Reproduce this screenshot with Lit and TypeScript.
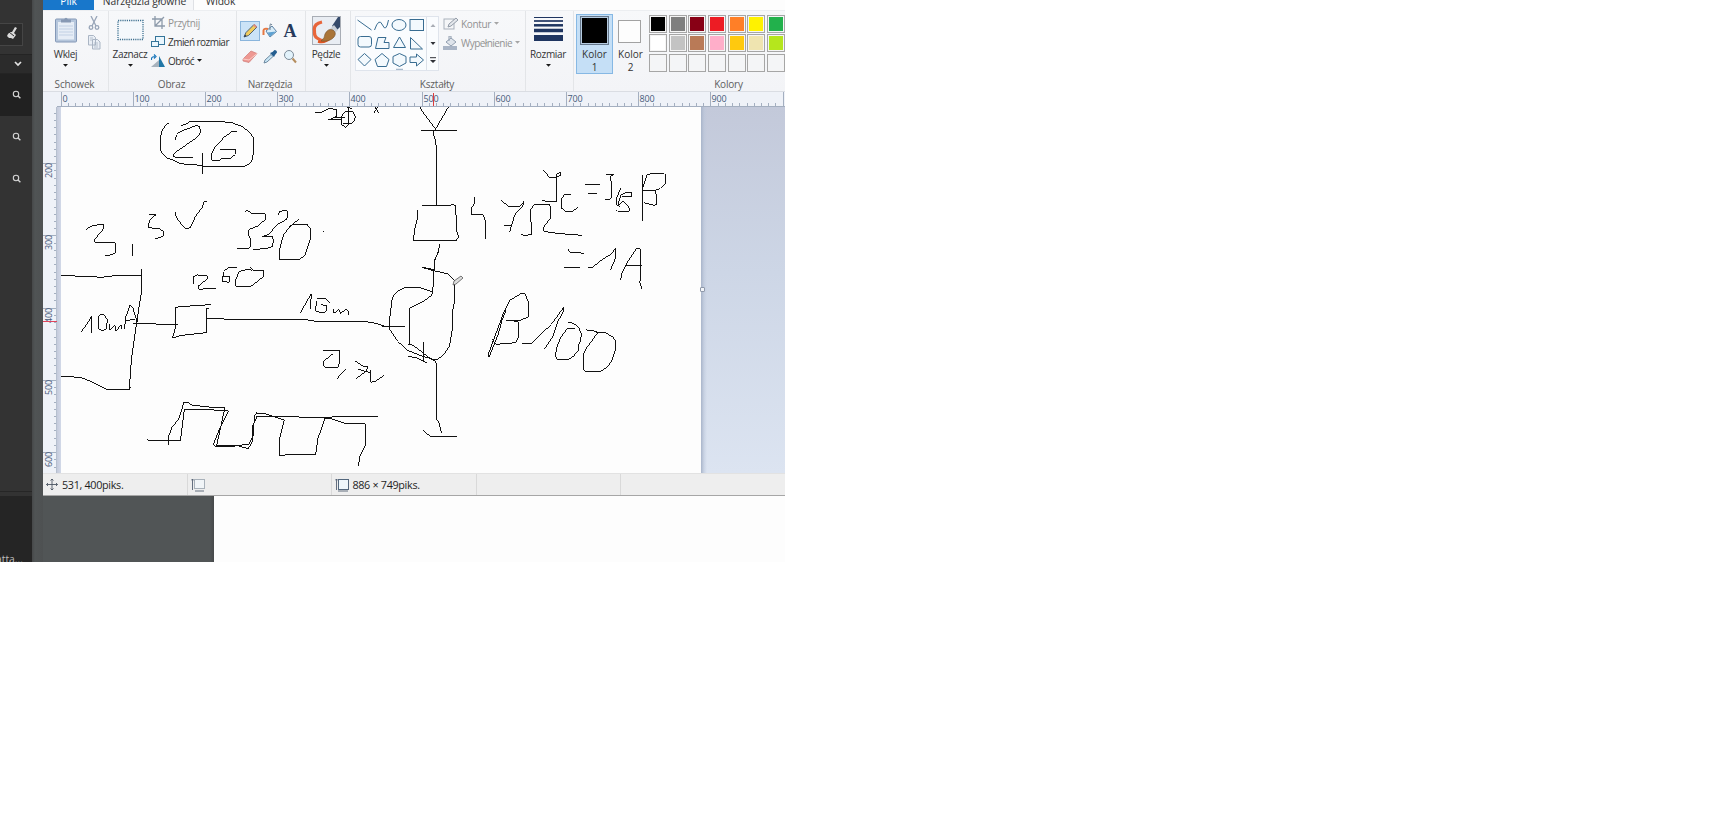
import { LitElement, html, css, svg } from "lit";
import { customElement } from "lit/decorators.js";

const search = html`<svg width="10" height="10" viewBox="0 0 10 10"><circle cx="4" cy="4" r="2.7" fill="none" stroke="#d4d4d4" stroke-width="1.1"/><path d="M6 6L8.4 8.2" stroke="#d4d4d4" stroke-width="1.4"/></svg>`;
const arrow = (c = "#1a1a1a") => html`<svg width="5" height="3" viewBox="0 0 5 3"><path d="M0 0H5L2.5 2.8Z" fill=${c}/></svg>`;

const STEP = 7.222;
const rows: string[][] = [
  ["#000000", "#7f7f7f", "#880015", "#ed1c24", "#ff7f27", "#fff200", "#22b14c"],
  ["#ffffff", "#c3c3c3", "#b97a57", "#ffaec9", "#ffc90e", "#efe4b0", "#b5e61d"],
  ["#f4f5f7", "#f4f5f7", "#f4f5f7", "#f4f5f7", "#f4f5f7", "#f4f5f7", "#f4f5f7"],
];

/* Pen strokes, grouped by board section: origin x, origin y, path in thirds of a pixel */
const strokes: [number, number, string][] = [
  [40, 100, `M386 69L375 77L364 98L361 115V150L368 162L381 174L400 180L420 191L470 195L495 199H614L630 190L638 176L640 155V111L622 91L605 79L575 68L545 65H450L441 71L424 77
    M406 119L410 104L420 95L470 76L479 80L482 98L471 112L401 161L400 169L409 172H458 M488 160V222 M590 94H577L552 112L525 142L516 160L515 180L540 181L546 175L574 174L586 163L587 149H540
    M138 388L160 376L191 373V386L165 417L164 427H224L228 437L227 458L212 465L196 466 M277 433V467
    M327 343L348 344L328 362L325 383L357 386L370 394L370 408L356 414L344 415 M406 337L409 352L431 382L440 386L451 383L466 350L487 322L492 305L501 304
    M616 335L622 331L637 341H675L677 357L656 377L626 389L624 400L632 418V440L626 446H590 M715 345L718 336L734 331L744 334V348L738 359L712 374L687 402L665 411H698L700 420L698 438L681 446L640 448
    M776 358L758 372L731 403L718 450V478L777 479L794 467L811 417V385L801 373H757L746 382 M850 394L852 395`],
  [40, 260, `M62 47L145 49L185 52L230 46H304 M304 27V100L296 148L284 230L274 300L268 387 M62 349L122 352L150 363L203 390H267L272 382
    M122 217L137 198L155 169L156 220 M176 169L177 207L188 213L199 206L202 180L192 164L183 162L176 169 M209 191L210 211L224 195L228 212L243 196L244 206 M254 208L256 175L270 136L278 142L292 186 M256 182L286 178
    M280 190H342L352 193H415 M512 134L420 140L408 142L405 208L397 234L425 226L499 218V147L507 146 M499 175H543L558 178L800 179L826 184H968L1000 188L1035 199H1080
    M461 71V49L472 45L502 47L503 56L475 78L476 88L528 84 M592 24L565 22L551 35L547 64L568 67L570 49L549 48 M636 31L626 27L598 34L587 59V79H633L669 51L671 33L640 30L630 22
    M780 160L814 101L811 146 M829 123L827 154L854 159L860 148L860 137L844 134 M872 130L857 115L830 116 M879 148L882 160L896 149L902 161L916 148L925 152L925 164
    M848 271L900 273V306L894 321L858 324L849 315L851 304L880 280 M918 327L889 358 M946 303L968 318L984 320L977 334L949 356 M955 328L991 338 M991 330L993 367L1005 364L1032 347
    M321 540L421 543L433 449L495 448L565 453L538 508L520 553L524 559H578L628 552L640 525L643 470L649 459L671 460L733 480L718 540V586L770 583H827L834 535L855 475L876 477L919 491H976V557L960 588L955 617
    M385 554V532L397 499L415 480L432 427L446 429L456 435L504 441L555 442L530 557L596 558L625 566L637 545V501L651 469H770L785 473H860L875 471H1013`],
  [300, 90, `M45 68H63L87 56L111 58V79L85 90H124 M104 82L134 84 M145 48V106L137 112L126 105L124 80L136 64L157 64L166 79L163 92L153 101H128 M133 48L157 59 M210 48L225 51L236 70 M233 51L222 69
    M358 48L370 69L407 117L447 48 M363 121H471 M407 117L399 129L408 155L409 344 M367 348L378 346H450L458 342L467 347L470 425L477 440L467 453H340L344 419L352 386L351 360 M419 463L415 487L405 507L402 539L367 532
    M523 321L522 342L515 354V375H549L556 392V448 M602 331L626 349H660L672 334L670 345L644 375L629 425 M613 407H637 M663 432L672 436L694 434L692 359L703 343H749L753 357V382L730 413L731 424L770 430L846 436
    M730 240L748 262H770L782 255V246L770 252L769 335H740L727 330 M812 314L792 315L784 329V354L797 364L818 364L833 353`],
  [470, 150, `M345 104H389 M355 130H381 M408 75L415 73H433L422 78L426 136L421 148L406 150 M452 115L441 142V166L450 170 M439 180L443 184L478 183L477 173L460 153L443 167L453 135L468 127L486 127L485 138L457 141
    M517 76V213 M519 112L531 75L542 71H583L588 77L585 101L571 115L553 122H520 M555 124L560 135V163L552 166L521 158
    M295 296L298 306L343 310 M282 352H330 M354 352L368 352L390 333L424 312L437 294L435 328L421 361 M452 390L456 369L473 336L500 294L511 296L510 398L515 416 M464 346H515
    M55 621L57 607L104 480L108 482L96 511L85 552L57 622 M67 568L77 583L137 578L147 560V517L132 513L107 511H152L175 500L176 458L165 432L153 431L119 451L105 480
    M156 580H185L244 523L281 472L279 486L264 514L249 558L224 597 M294 517H304L325 530L334 552L332 572L326 583V600L312 617L299 627L262 628L256 618L262 585L274 560L292 536L315 535
    M349 540L368 541L386 548L376 558L347 598L342 609V661L348 664H393L411 652L424 635L436 601V572L428 560L403 547L378 548`],
  [370, 250, `M207 0L194 31L188 126 M156 52L191 62L235 72L254 91V154L248 182L247 236L238 290L221 313L205 327L195 329L160 320L112 301L83 274L58 236L60 199L67 143L80 125L106 112L152 114L188 126L184 137L157 156L119 174V284L115 283L130 286L177 323L195 333L200 345V507L207 520L215 550
    M35 229H106 M162 276V334 M114 319L140 324L164 336L172 338 M160 541L172 552L181 558L201 560H261`],
];

@customElement("app-root")
export class AppRoot extends LitElement {
  static styles = css`
    :host { display: block; width: 1721px; height: 815px; background: #fff; overflow: hidden; }
    * { box-sizing: border-box; }
    svg { display: block; flex: none; }
    .screen { width: 785px; height: 562px; display: flex; overflow: hidden; background: #fdfdfd; font: 10px/14px "Open Sans", "Noto Sans", sans-serif; letter-spacing: -0.32px; color: #333; }
    .side { width: 32px; flex: none; background: #333; display: flex; flex-direction: column; overflow: hidden; }
    .side-top { height: 54px; padding-top: 23px; }
    .brush { width: 23px; height: 23px; background: #2c2c2c; border: 1px solid #454545; border-left: 0; padding: 3px 0 0 6px; }
    .drop { height: 20px; background: #2b2b2b; border: 1px solid #242424; border-width: 1px 0; padding: 6px 0 0 14px; }
    .hit { height: 42px; padding: 16px 0 0 12px; }
    .dark { background: #212121; height: 42px; }
    .side-mid { height: 292px; border-bottom: 1px solid #262626; }
    .side-end { flex: 1; background: #252525; margin-top: 4px; display: flex; align-items: flex-end; color: #bdbdbd; font-size: 10.3px; }
    .side-end span { height: 10px; margin-left: -4px; white-space: nowrap; letter-spacing: 0; }
    .gutter { width: 11px; flex: none; background: linear-gradient(90deg, #464849, #505455 3px, #4e5152); }
    .main { width: 742px; display: flex; flex-direction: column; }
    .tabs { height: 10px; display: flex; background: #fdfdfd; }
    .tab { line-height: 14px; height: 10px; overflow: hidden; text-align: center; font-size: 10.3px; letter-spacing: -0.1px; }
    .tab span { display: block; margin-top: -6.500px; }
    .file { width: 51px; background: #1877cb; color: #fff; }
    .home { width: 100px; background: #f6f7f9; border-right: 1px solid #dfe1e5; padding-left: 2px; }
    .view { width: 53px; }
    .ribbon { height: 82px; background: linear-gradient(#f7f8fa, #f3f4f7); border-bottom: 1px solid #dadde3; border-top: 1px solid #eceef1; display: flex; }
    .group { height: 80px; padding-top: 1px; border-right: 1px solid #e3e5e8; display: grid; grid-template-rows: 66px 12px; flex: none; overflow: hidden; }
    .body { display: flex; align-items: flex-start; min-width: 0; }
    .cap { line-height: 12px; text-align: center; color: #5e5e5e; white-space: nowrap; letter-spacing: -0.18px; padding-right: 2px; }
    .big { display: flex; flex-direction: column; align-items: center; flex: none; white-space: nowrap; }
    .pic { height: 31px; display: flex; align-items: flex-start; }
    .big .name { height: 17px; line-height: 14px; }
    .small { display: flex; flex-direction: column; }
    .line { height: 19px; display: flex; align-items: center; white-space: nowrap; gap: 3px; }
    .tight { letter-spacing: -0.55px; }
    .dim { color: #929292; }
    .g1 { width: 66px; } .g2 { width: 128px; } .g3 { width: 69px; } .g4 { width: 45px; } .g5 { width: 175px; } .g6 { width: 48px; } .g7 { width: 211px; border: 0; }
    .tools { display: grid; grid-template-columns: 20px 20px 20px; grid-template-rows: 26px 24px; padding: 9px 0 0 3px; }
    .tool { width: 20px; height: 20px; display: flex; align-items: center; justify-content: center; }
    .on { background: #cbe3f7; border: 1px solid #8ab5dc; }
    .letter { font: bold 18px/18px "Liberation Serif", serif; color: #263a5c; letter-spacing: 0; }
    .gallery { width: 84px; height: 55px; margin: 4px 0 0 4px; background: #fafcfe; border: 1px solid #dfe4ec; display: flex; flex: none; }
    .color { width: 37px; height: 60px; margin-top: 2px; text-align: center; line-height: 13px; flex: none; letter-spacing: 0; }
    .chosen { background: #c5dff6; border: 1px solid #86b8e4; }
    .ink { width: 29px; height: 29px; margin: 1px auto 3px; background: #000; border: 1px solid #66788c; box-shadow: inset 0 0 0 1px #b6cbe0; }
    .paper { width: 23px; height: 23px; margin: 6px 6px 5px; background: #fdfdfd; border: 1px solid #a2a2a2; }
    .second { margin: 2px -17px 0 -1px; }
    .color div + div { line-height: 12px; }
    .palette { display: grid; grid-template-columns: repeat(7, 18px); grid-auto-rows: 18px; gap: 1.8px 1.67px; margin: 2.500px 0 0 17px; }
    .cell { border: 1px solid #a6a6a6; box-shadow: inset 0 0 0 1px #f5f5f5; }
    .hruler { height: 15px; flex: none; }
    .work { height: 366px; display: flex; overflow: hidden; }
    .edge { width: 4px; background: linear-gradient(90deg, #c4cadb, #d2d9e8); flex: none; }
    .desk { flex: 1; background: linear-gradient(90deg, #a9b5ca, #b9c4d880 3px, transparent 6px), linear-gradient(#c3c9da, #cdd6e6 45%, #dce4f1); position: relative; }
    .grip { position: absolute; left: -1px; top: 180px; width: 5px; height: 5px; background: #f4f6fa; border: 1px solid #8f99aa; border-radius: 1px; }
    .status { height: 23px; background: #eee; border-top: 1px solid #e2e2e2; border-bottom: 1px solid #a6a6a6; display: flex; color: #1e1e1e; font-size: 10.8px; }
    .stat { width: 144.4px; display: flex; align-items: center; gap: 3px; border-right: 1px solid #d9d9d9; padding-left: 3px; white-space: nowrap; }
    .stat:first-child { width: 145px; }
    .below { height: 66px; display: flex; }
    .gray { width: 171px; background: linear-gradient(90deg, transparent 167px, #46494a), #515556; }
    .rt { font: 9px "Open Sans", "Noto Sans", sans-serif; letter-spacing: -0.1px; fill: #475a78; }
  `;

  private big(pic: unknown, name: string, width: number) {
    return html`<div class="big" style="width:${width}px"><div class="pic">${pic}</div><div class="name">${name}</div>${arrow()}</div>`;
  }

  private ribbon() {
    return html`<div class="ribbon">
      <div class="group g1"><div class="body" style="padding:4px 0 0 9px">
        ${this.big(html`<svg width="24" height="28" viewBox="0 0 24 28"><rect x="1.5" y="3" width="21" height="23" rx="1" fill="#b5c6dc" stroke="#8498b7"/><rect x="4" y="6" width="16" height="17.5" fill="#e6edf6"/><path d="M5 10H19M5 13H19M5 16H19M5 19H19" stroke="#c1d0e4"/><path d="M7 3.5h3Q12 0 14 3.5h3v3H7Z" fill="#8799b4"/></svg>`, "Wklej", 27)}
        <div class="small" style="padding-left:9px"><svg width="13" height="36" viewBox="0 0 13 36"><g fill="none" stroke="#98a5b8" stroke-width="1.3"><path d="M3 0L8 10M9 0L4 10"/><circle cx="3" cy="11.500" r="1.8"/><circle cx="9" cy="11.500" r="1.8"/></g><path d="M.5 19.500h5l2 2V29h-7Z M4.500 23.500h5l2.500 2.500V33h-7.500Z" fill="#e9eef5" stroke="#aab5c4"/><path d="M6 27h4M6 29h4M6 31h4M2 22h3M2 24h2" stroke="#aab5c4" stroke-width=".8"/></svg></div>
      </div><div class="cap">Schowek</div></div>
      <div class="group g2"><div class="body" style="padding:4px 0 0 3px">
        ${this.big(html`<svg width="27" height="26" viewBox="0 0 27 26"><rect x="1" y="4.500" width="25" height="19" fill="#f4f8fc" stroke="#3f7191" stroke-width="1.3" stroke-dasharray="1.200 1"/></svg>`, "Zaznacz", 36)}
        <div class="small" style="padding-left:3px;margin-top:-3px">
          <div class="line dim"><svg width="14" height="14" viewBox="0 0 14 14"><path d="M4 0V10H14M1 3H11V13M4 10L13 1" fill="none" stroke="#8d9aaa" stroke-width="1.3"/></svg>Przytnij</div>
          <div class="line tight"><svg width="14" height="14" viewBox="0 0 14 14"><rect x="4.500" y="1.500" width="9" height="8" fill="#eaf6fd" stroke="#347499"/><rect x=".5" y="6.500" width="7" height="5" fill="#eaf6fd" stroke="#347499"/></svg>Zmień rozmiar</div>
          <div class="line tight"><svg width="14" height="14" viewBox="0 0 14 14"><path d="M0 13L8 6V13Z" fill="#a7b2bd"/><path d="M8 2L14 13H8Z" fill="#2177a6"/><path d="M.5 6Q0 2.500 4 2.500M3 .5L5 2.500L3 4.500" fill="none" stroke="#1976bb" stroke-width="1.2"/></svg>Obróć ${arrow()}</div>
        </div>
      </div><div class="cap">Obraz</div></div>
      <div class="group g3"><div class="tools">
        <div class="tool on"><svg width="16" height="16" viewBox="0 0 16 16"><path d="M2 14L4 9.500L12 1.500L15 4L6.500 12.500Z" fill="#f1cc5c" stroke="#40556c" stroke-width=".9"/><path d="M11 2.500L14 5L15 3.500L12.500 1Z" fill="#dd8b85"/><path d="M2 14L3 11.500L4.500 13Z" fill="#283648"/></svg></div>
        <div class="tool"><svg width="16" height="16" viewBox="0 0 16 16"><path d="M4 8L10 3L14.500 8.500L8 14Z" fill="#d9ecf8" stroke="#5c82a4"/><path d="M5.500 9.500L14 8.500L8 13.500Z" fill="#5da1d2"/><path d="M1.500 12V7.500Q2 5 6 6" fill="none" stroke="#e67842" stroke-width="2"/><path d="M8 7V1.500Q9 0 10 2" fill="none" stroke="#6e8295"/></svg></div>
        <div class="tool"><span class="letter">A</span></div>
        <div class="tool"><svg width="16" height="14" viewBox="0 0 16 14"><path d="M1 9L9 1L15 3.500L7 12.500L1 11Z" fill="#ee9892" stroke="#cf7b79" stroke-width=".7"/><path d="M1 9L7 10L15 3.500" fill="none" stroke="#fbcbc4"/></svg></div>
        <div class="tool"><svg width="16" height="16" viewBox="0 0 16 16"><path d="M2 14L3 11L9 5.500L11 7.500L5 13Z" fill="#c7e5f5" stroke="#648097" stroke-width=".9"/><path d="M8 4L12 8L13 6L15 3.500Q15 1 12.500 1L10.500 3Z" fill="#245e90"/></svg></div>
        <div class="tool"><svg width="15" height="16" viewBox="0 0 15 16"><circle cx="6" cy="6" r="4.500" fill="#e2f2fb" stroke="#7c8b98"/><path d="M9.500 9.500L13 13.500" stroke="#b58e5f" stroke-width="2"/></svg></div>
      </div><div class="cap">Narzędzia</div></div>
      <div class="group g4"><div class="body" style="padding:4px 0 0 4px">
        ${this.big(html`<svg width="29" height="29" viewBox="0 0 29 29"><rect x=".5" y=".5" width="28" height="28" fill="#e9edf3" stroke="#a8adb5"/><path d="M10 6Q1 8 2.500 15Q2 20 5 22T12 25.500" fill="none" stroke="#e8653a" stroke-width="3.200"/><path d="M6 25.500Q13 27.500 18 22" fill="none" stroke="#e25622" stroke-width="2.500"/><path d="M20 10L26 1H28V11L25 14Z" fill="#354a6b"/><path d="M18 13L22 9L26 14L23 17Z" fill="#cad0d8"/><path d="M9 25Q13 22 13 18Q16 12 21 14Q25 17 22 21Q18 26 9 25Z" fill="#a97438" stroke="#7c5731" stroke-width=".7"/></svg>`, "Pędzle", 32)}
      </div></div>
      <div class="group g5"><div class="body">
        <div class="gallery"><svg width="82" height="53" viewBox="355 17 82 53"><g fill="#f3f9fd" stroke="#386c91" stroke-width="1">
          <path d="M356.500 20L370.500 30"/><path d="M373.500 30Q378 17 381.500 25T387.500 20" fill="none"/><ellipse cx="398" cy="25" rx="7" ry="5.500"/><rect x="409" y="19.500" width="13.500" height="11"/>
          <rect x="357" y="36.500" width="13.500" height="10.500" rx="2.500"/><path d="M374.500 48.500L377 37.500H385L383 42.500H388V48.500Z"/><path d="M398.500 37L404.500 47.500H392.500Z"/><path d="M409.500 37.500V49H421.500Z"/>
          <path d="M363.500 53.500L370 59.500L363.500 66L357 59.500Z"/><path d="M381 53.500L388 59.500L385.500 66.500H376.500L374 59.500Z"/><path d="M398.500 53.500L405 56.500V63L398.500 66.500L392 63V56.500Z"/><path d="M409 57H415.500V54L422.500 60L415.500 66V62.500H409Z"/></g>
          <path d="M425.500 17V70" stroke="#dce1e9"/><path d="M429.500 27H434.500L432 24Z" fill="#a9adb5"/><path d="M429.500 42H434.500L432 45ZM429 60H435L432 63Z" fill="#303238"/><path d="M429 57.700H435" stroke="#303238"/><path d="M395 69.500H402" stroke="#a7b9cb" stroke-width="1.500"/></svg></div>
        <div class="small" style="padding:2px 0 0 4px">
          <div class="line dim"><svg width="15" height="14" viewBox="0 0 15 14"><rect x="1" y="2" width="10" height="10" fill="#f5f6f8" stroke="#a9b1bc"/><path d="M5 10L6 7L13 1L15 3L8 9Z" fill="#e4e7ec" stroke="#939ca8"/></svg>Kontur ${arrow("#a5a5a5")}</div>
          <div class="line dim tight"><svg width="15" height="14" viewBox="0 0 15 14"><rect x="0" y="10" width="14" height="4" fill="#aab5c6"/><path d="M3 6L8 2L13 6L8 10Z" fill="#dfe4eb" stroke="#929fb0"/><path d="M6 5V0H8V3" fill="none" stroke="#929fb0"/></svg>Wypełnienie ${arrow("#a5a5a5")}</div>
        </div>
      </div><div class="cap">Kształty</div></div>
      <div class="group g6"><div class="body" style="padding:4px 0 0 4px">
        ${this.big(html`<svg width="29" height="27" viewBox="0 0 29 27"><path d="M0 1.500H29" stroke="#1f3560"/><path d="M0 5H29" stroke="#1f3560" stroke-width="1.700"/><path d="M0 9.300H29" stroke="#1f3560" stroke-width="2.500"/><path d="M0 14.500H29" stroke="#1f3560" stroke-width="3.500"/><path d="M0 22H29" stroke="#1f3560" stroke-width="6"/></svg>`, "Rozmiar", 36)}
      </div></div>
      <div class="group g7"><div class="body">
        <div class="color chosen" style="margin-left:2px"><div class="ink"></div>Kolor<div>1</div></div>
        <div class="color second"><div class="paper"></div>Kolor<div>2</div></div>
        <div class="palette">${rows.flat().map((c) => html`<div class="cell" style="background:${c}"></div>`)}</div>
      </div><div class="cap" style="padding-left:100px">Kolory</div></div>
    </div>`;
  }

  private ticks(from: number, to: number, zero: number, vertical: boolean) {
    const out = [];
    for (let i = 0; i < 110; i++) {
      const p = zero + i * STEP;
      if (p < from || p > to) continue;
      const major = i % 10 === 0;
      const p5 = Math.floor(p) + 0.5;
      out.push(vertical
        ? svg`<path d=${`M${major ? 43 : 54}  ${p5}H57`} stroke="#a4afc0"/>${major ? svg`<text class="rt" transform=${`translate(52 ${p5 + 14.5}) rotate(-90)`}>${i * 10}</text>` : ""}`
        : svg`<path d=${`M${p5} ${major ? 92 : 103}V106`} stroke="#a4afc0"/>${major && i < 100 ? svg`<text class="rt" x=${p5 + 1} y="101.500">${i * 10}</text>` : ""}`);
    }
    return out;
  }

  render() {
    return html`<div class="screen">
      <div class="side">
        <div class="side-top"><div class="brush"><svg width="13" height="14" viewBox="0 0 13 14"><path d="M9 0L11 1L8 6L10 8L7 12L5 11L3 11L1 9L2 7L4 5L6 5Z" fill="#d9d9d9"/><path d="M3 5L8 9" stroke="#2c2c2c"/></svg></div></div>
        <div class="drop"><svg width="8" height="6" viewBox="0 0 8 6"><path d="M1 1L4 4L7 1" fill="none" stroke="#e3e3e3" stroke-width="1.700"/></svg></div>
        <div class="hit dark">${search}</div>
        <div class="hit">${search}</div>
        <div class="hit">${search}</div>
        <div class="side-mid"></div>
        <div class="side-end"><span>atta...</span></div>
      </div>
      <div class="gutter"></div>
      <div class="main">
        <div class="tabs"><div class="tab file"><span>Plik</span></div><div class="tab home"><span>Narzędzia główne</span></div><div class="tab view"><span>Widok</span></div></div>
        ${this.ribbon()}
        <svg class="hruler" width="742" height="15" viewBox="43 92 742 15"><rect x="43" y="92" width="742" height="15" fill="#eff2f8"/><path d="M57 106.500H785" stroke="#a4afc0"/>${this.ticks(60, 785, 61, false)}<path d="M433.500 93V106" stroke="#dd3c3c"/></svg>
        <div class="work">
          <svg width="14" height="366" viewBox="43 107 14 366"><rect x="43" y="107" width="14" height="366" fill="#eff2f8"/>${this.ticks(108, 473, 19.300, true)}<path d="M56.500 107V473" stroke="#b5bfce"/><path d="M43 321.500H57" stroke="#e0455c"/></svg>
          <div class="edge"></div>
          <svg width="640" height="366" viewBox="61 107 640 366"><rect x="61" y="107" width="640" height="366" fill="#fdfdfd"/>
            <g fill="none" stroke="#111" stroke-width="3" shape-rendering="crispEdges">${strokes.map(([x, y, d]) => svg`<path transform=${`translate(${x} ${y}) scale(.33333)`} d=${d}/>`)}</g>
            <path d="M453 285L454 281L461 276L463 278L456 284Z" fill="#ddd" stroke="#555" stroke-width=".8"/></svg>
          <div class="desk"><div class="grip"></div></div>
        </div>
        <div class="status">
          <div class="stat"><svg width="12" height="13" viewBox="0 0 12 13"><path d="M6 1V12M.5 6.500H11.500M4.500 2.500L6 1L7.500 2.500M4.500 10.500L6 12L7.500 10.500M2 5L.5 6.500L2 8M10 5L11.500 6.500L10 8" fill="none" stroke="#4c5662" stroke-width=".9"/></svg><span style="margin-left:1px">531, 400piks.</span></div>
          <div class="stat"><svg width="14" height="14" viewBox="0 0 14 14"><path d="M1.500 1V12M0 2.500L1.500 1L3 2.500M4 13H13" fill="none" stroke="#536073" stroke-width=".9"/><rect x="3.500" y="1.500" width="10" height="9" fill="#f1f5f8" stroke="#607080" stroke-dasharray="1 1"/></svg></div>
          <div class="stat"><svg width="14" height="14" viewBox="0 0 14 14"><path d="M1.500 1V12M0 2.500L1.500 1L3 2.500M3 13H13" fill="none" stroke="#536073" stroke-width=".9"/><rect x="3.500" y="1.500" width="10" height="10" fill="#eef6fb" stroke="#53677d"/></svg><span>886 × 749piks.</span></div>
          <div class="stat"></div>
        </div>
        <div class="below"><div class="gray"></div></div>
      </div>
    </div>`;
  }
}
